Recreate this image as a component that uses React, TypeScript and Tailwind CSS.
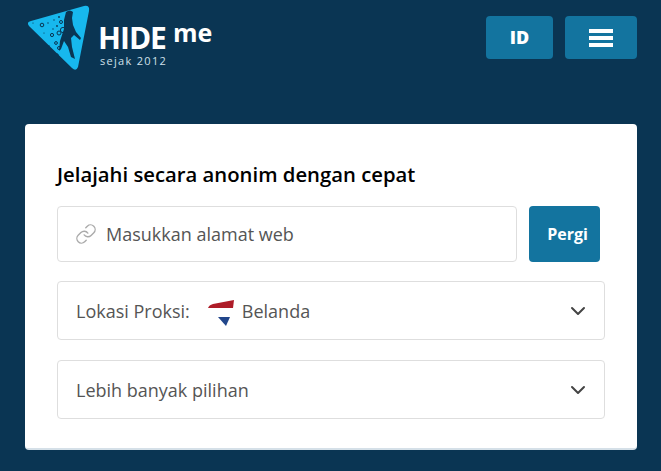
import React from 'react';
import { ChevronDown, Link } from 'lucide-react';

const Logo = () => (
  <svg width="66" height="68" viewBox="0 0 66 68" className="shrink-0">
    <path d="M3 21 Q0 17 5 16 L58 1 Q64 0 63 6 L52 62 Q50 67 46 63 Z" fill="#17b8ee" />
    {/* diver silhouette */}
    <path
      d="M40 7 Q44 4 47 7 L46 13 L47 20 L50 27 L55 33 L54 35 L48 30 L45 33 L46 42 L49 54 L45 52 L42 42 L38 36 L35 44 L33 46 L34 36 L38 24 L38 15 Z"
      fill="#0a3553"
    />
    <g fill="none" stroke="#0a3553" strokeWidth="1">
      <circle cx="16" cy="20" r="1.8" />
      <circle cx="26" cy="30" r="1.6" />
      <circle cx="33" cy="28" r="2" />
      <circle cx="37" cy="25" r="2.6" />
      <circle cx="33" cy="43" r="1.5" />
      <circle cx="26" cy="48" r="2" />
      <circle cx="30" cy="38" r="1.4" />
      <circle cx="35" cy="17" r="1.5" />
      <circle cx="31" cy="50" r="1.2" />
    </g>
    <g fill="#0a3553">
      <circle cx="7" cy="18" r="0.6" />
      <circle cx="22" cy="18" r="0.7" />
      <circle cx="28" cy="15" r="0.7" />
      <circle cx="18" cy="28" r="0.6" />
      <circle cx="31" cy="21" r="0.9" />
      <circle cx="27" cy="24" r="0.7" />
      <circle cx="33" cy="12" r="0.9" />
      <circle cx="27" cy="55" r="0.8" />
      <circle cx="23" cy="41" r="0.7" />
      <circle cx="36" cy="35" r="1" />
    </g>
  </svg>
);

const Row = ({ children }: { children: React.ReactNode }) => (
  <div className="flex h-[59px] w-[548px] items-center justify-between rounded border border-[#dedede] pl-[18px] pr-[14px] text-[18px] text-[#555]">
    <div className="flex items-center pt-[1px]">{children}</div>
    <ChevronDown size={24} strokeWidth={2} className="text-[#444]" />
  </div>
);

export default function App() {
  return (
    <div className="h-[471px] overflow-hidden bg-[#0a3553] font-['Open_Sans',sans-serif]">
      <div className="flex h-[124px] items-start justify-between pl-[26px] pr-[24px]">
        <div className="flex pt-[5px]">
          <Logo />
          <div className="ml-[6px] pt-[16px] text-white">
            <div className="flex items-start">
              <span className="text-[30px] font-bold leading-[34px] tracking-[-1px]">HIDE</span>
              <span className="ml-[7px] -mt-[2px] text-[25px] font-bold leading-[26px]">me</span>
            </div>
            <div className="ml-[2px] text-[11px] leading-[11px] tracking-[1.3px] text-[#cfe0ea]">sejak 2012</div>
          </div>
        </div>
        <div className="flex gap-3 pt-[16px]">
          <div className="flex h-[43px] w-[67px] items-center justify-center rounded bg-[#13749f] text-[18px] font-extrabold text-white">
            ID
          </div>
          <div className="flex h-[43px] w-[72px] flex-col items-center justify-center gap-[3px] rounded bg-[#13749f]">
            <div className="h-[4px] w-[24px] bg-white" />
            <div className="h-[4px] w-[24px] bg-white" />
            <div className="h-[4px] w-[24px] bg-white" />
          </div>
        </div>
      </div>
      <div className="mx-[25px] h-[326px] w-[612px] rounded-sm border-b-2 border-b-[#d5e0e8] bg-white pl-[32px] pt-[36px]">
        <h1 className="text-[20.3px] font-semibold leading-[28px] text-black">Jelajahi secara anonim dengan cepat</h1>
        <div className="mt-[18px] flex gap-3">
          <div className="flex h-[56px] w-[460px] items-center rounded border border-[#dedede] pl-[17px] text-[18px] text-[#555]">
            <Link size={22} strokeWidth={1.5} className="text-[#aaa]" />
            <span className="ml-[9px] pt-[1px]">Masukkan alamat web</span>
          </div>
          <div className="flex h-[56px] w-[71px] items-center justify-end rounded bg-[#13749f] pr-[12px] text-[16px] font-bold text-white">
            Pergi
          </div>
        </div>
        <div className="mt-[19px] flex flex-col gap-5">
          <Row>
            <span>Lokasi Proksi:</span>
            <svg width="28" height="32" viewBox="0 0 28 32" className="ml-[17px]">
              <path d="M1 13 Q2 10 6 9 L27 5 L26 13 Z" fill="#ae1c28" />
              <path d="M11 22 L23 22 L19 31 Z" fill="#21468b" />
            </svg>
            <span className="ml-[7px]">Belanda</span>
          </Row>
          <Row>
            <span>Lebih banyak pilihan</span>
          </Row>
        </div>
      </div>
    </div>
  );
}
